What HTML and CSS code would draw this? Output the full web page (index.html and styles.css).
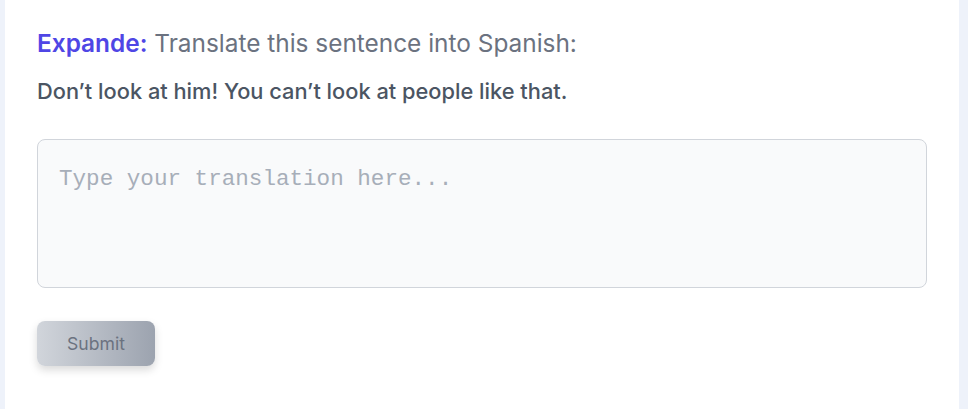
FILE: index.html
```html
<!DOCTYPE html>
<html>
<head>
<meta charset="utf-8">
<link rel="stylesheet" href="styles.css">
</head>
<body>
<div class="page">
  <div class="card">
    <p class="prompt"><span class="tag">Expande:</span> Translate this sentence into Spanish:</p>
    <p class="sentence">Don’t look at him! You can’t look at people like that.</p>
    <textarea class="answer" placeholder="Type your translation here..."></textarea>
    <button class="submit">Submit</button>
  </div>
</div>
</body>
</html>
```
FILE: styles.css
```css
html, body {
  margin: 0;
  padding: 0;
  background: #eef2fa;
  font-family: Inter, "Noto Sans", sans-serif;
}
.page {
  padding: 0 9px 0 5px;
  height: 409px;
  box-sizing: border-box;
}
.card {
  background: #ffffff;
  height: 100%;
  box-sizing: border-box;
  padding: 27px 32px 0 32px;
  display: flex;
  flex-direction: column;
  align-items: flex-start;
}
.prompt {
  margin: 0;
  font-size: 24.4px;
  line-height: 32px;
  color: #6b7280;
}
.tag {
  color: #4f46e5;
  font-weight: 600;
}
.sentence {
  margin: 17px 0 0 0;
  font-size: 21.8px;
  line-height: 30px;
  font-weight: 500;
  color: #4b5563;
}
.answer {
  margin-top: 33px;
  width: 890px;
  height: 149px;
  box-sizing: border-box;
  border: 1px solid #d1d5db;
  border-radius: 8px;
  background: #f9fafb;
  padding: 26px 21px;
  font-family: "Liberation Mono", monospace;
  font-size: 22.6px;
  resize: none;
  outline: none;
}
.answer::placeholder {
  color: #a7aeb9;
}
.submit {
  margin-top: 33px;
  width: 118px;
  height: 45px;
  border: none;
  border-radius: 8px;
  background: linear-gradient(to right, #d1d5db, #9ca3af);
  color: #6b7280;
  font-family: Inter, sans-serif;
  font-size: 17.6px;
  box-shadow: 0 4px 8px rgba(0,0,0,0.15);
}
```
